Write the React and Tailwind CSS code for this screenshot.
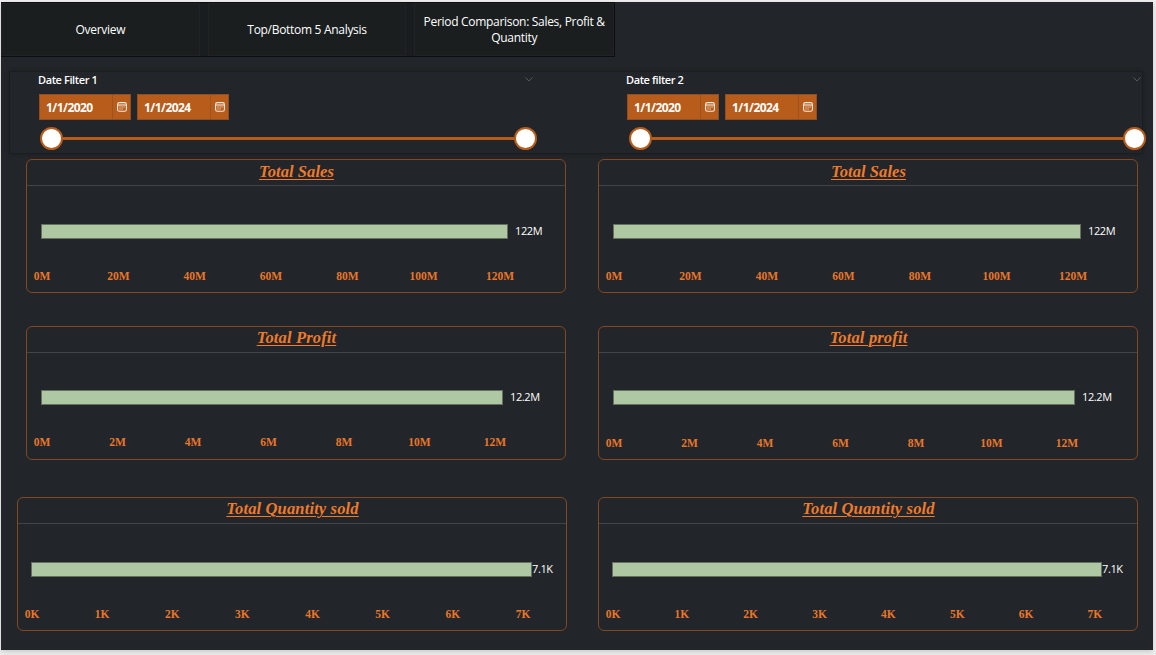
import React from "react";

const tabs = [
  { label: "Overview", width: "w-[199px]" },
  { label: "Top/Bottom 5 Analysis", width: "w-[199px]" },
  { label: "Period Comparison: Sales, Profit & Quantity", width: "w-[200px]" },
];

const salesTicks = ["0M", "20M", "40M", "60M", "80M", "100M", "120M"];
const profitTicks = ["0M", "2M", "4M", "6M", "8M", "10M", "12M"];
const quantityTicks = ["0K", "1K", "2K", "3K", "4K", "5K", "6K", "7K"];

function CalendarIcon() {
  return (
    <svg width="10" height="10" viewBox="0 0 10 10" fill="none" stroke="#f7e9df">
      <rect x="0.6" y="0.6" width="8.8" height="8.6" rx="1.8" strokeWidth="1.1" />
      <path d="M0.6 3h8.8" strokeWidth="1.1" />
      <path d="M2.4 5h1.2M4.5 5h1.2M6.5 5h1.2M2.4 7h1.2M4.5 7h1.2" strokeWidth="1.1" />
    </svg>
  );
}

function DateField({ value }) {
  return (
    <div className="flex h-[26px] w-[92px] border border-[#8f4f24] bg-[#b75c1b]">
      <div className="flex w-[73px] items-center border-r border-[#9c5421] pl-[6px] pt-px font-['Open_Sans',sans-serif] text-[12px] font-bold leading-none tracking-[-0.55px] text-white">
        {value}
      </div>
      <div className="flex flex-1 items-center justify-center">
        <CalendarIcon />
      </div>
    </div>
  );
}

function Handle() {
  return <div className="size-[23px] shrink-0 rounded-full border-2 border-[#b75c1b] bg-white" />;
}

function DateFilter({ title, className, slider }) {
  return (
    <div className={className}>
      <div className="flex h-[16px] items-center justify-between pb-[2px]">
        <span className="text-[11px] font-semibold leading-none tracking-[-0.4px] text-white">{title}</span>
        <svg className="mr-px" width="8" height="5" viewBox="0 0 8 5" fill="none" stroke="#55585b">
          <path d="M0.5 0.5 4 4 7.5 0.5" />
        </svg>
      </div>
      <div className="ml-px mt-[6px] flex gap-[6px]">
        <DateField value="1/1/2020" />
        <DateField value="1/1/2024" />
      </div>
      <div className={`mt-[7px] flex items-center ${slider}`}>
        <Handle />
        <div className="h-[3px] flex-1 bg-[#b75c1b]" />
        <Handle />
      </div>
    </div>
  );
}

function BarCard({ title, value, ticks, card, heading, plot, bar, axis, valueGap }) {
  return (
    <section className={`h-[134px] rounded-[6px] border border-[#84471f] ${card}`}>
      <h2
        className={`flex h-[26px] items-start justify-center border-b border-[#424547] pl-px font-['Liberation_Serif',serif] text-[16.5px] font-bold italic leading-[18px] text-[#ee7a2b] ${heading}`}
      >
        <span className="underline decoration-1 underline-offset-2">{title}</span>
      </h2>
      <div className={`flex h-[15px] items-center ${plot}`}>
        <div className={`h-[15px] border border-[#65705f] bg-[#aec8a3] ${bar}`} />
        <span
          className={`pb-[2px] font-['Open_Sans',sans-serif] text-[11px] font-medium leading-none tracking-[-0.4px] text-white ${valueGap}`}
        >
          {value}
        </span>
      </div>
      <div className={`flex justify-between ${axis}`}>
        {ticks.map((tick) => (
          <span
            key={tick}
            className="flex w-0 justify-center whitespace-nowrap font-['Liberation_Serif',serif] text-[11.5px] font-bold leading-[14px] text-[#e8772b]"
          >
            {tick}
          </span>
        ))}
      </div>
    </section>
  );
}

export default function App() {
  return (
    <div className="h-[655px] w-[1156px] overflow-hidden bg-[#eeeeee] pl-px pt-[2px] font-['Open_Sans',sans-serif]">
      <main className="h-[648px] w-[1152px] bg-[#222529] shadow-[0_2px_5px_rgba(0,0,0,0.15)]">
        <nav className="flex h-[55px] w-[614px] gap-[8px] border-b border-r border-t border-[#0c0d0e] bg-[#1a1d20]">
          {tabs.map((tab) => (
            <button
              key={tab.label}
              className={`flex h-[53px] items-center justify-center border border-[#202224] bg-[#1a1e1f] px-[5px] text-center text-[12px] font-medium leading-[16px] tracking-[-0.3px] text-white ${tab.width}`}
            >
              {tab.label}
            </button>
          ))}
        </nav>

        <div className="ml-[8px] mt-[14px] flex h-[83px] w-[1134px] border border-[#1b1e21] shadow-[0_0_5px_rgba(0,0,0,0.18)]">
          <DateFilter title="Date Filter 1" className="ml-[28px] w-[496px]" slider="ml-[2px] w-[497px]" />
          <DateFilter title="Date filter 2" className="ml-[92px] w-[516px] shrink-0" slider="ml-[3px] w-[517px]" />
        </div>

        <div className="mt-[5px] flex gap-[32px] pl-[25px]">
          <BarCard title="Total Sales" value="122M" ticks={salesTicks} card="w-[540px]" heading="pt-[3px] tracking-[0.08px]" plot="mt-[38px]" bar="ml-[14px] w-[467px]" axis="ml-[15px] mt-[30px] w-[458px]" valueGap="ml-[7px]" />
          <BarCard title="Total Sales" value="122M" ticks={salesTicks} card="w-[540px]" heading="pt-[3px] tracking-[0.08px]" plot="mt-[38px]" bar="ml-[14px] w-[468px]" axis="ml-[15px] mt-[30px] w-[459px]" valueGap="ml-[7px]" />
        </div>
        <div className="mt-[33px] flex gap-[32px] pl-[25px]">
          <BarCard title="Total Profit" value="12.2M" ticks={profitTicks} card="w-[540px]" heading="pt-[2px] tracking-[0.15px]" plot="mt-[37px]" bar="ml-[14px] w-[462px]" axis="ml-[15px] mt-[30px] w-[453px]" valueGap="ml-[7px]" />
          <BarCard title="Total profit" value="12.2M" ticks={profitTicks} card="w-[540px]" heading="pt-[2px] tracking-[0.15px]" plot="mt-[37px]" bar="ml-[14px] w-[462px]" axis="ml-[15px] mt-[31px] w-[453px]" valueGap="ml-[7px]" />
        </div>
        <div className="mt-[37px] flex gap-[31px] pl-[16px]">
          <BarCard title="Total Quantity sold" value="7.1K" ticks={quantityTicks} card="w-[550px]" heading="pt-[2px] tracking-[0.15px]" plot="mt-[38px]" bar="ml-[13px] w-[501px]" axis="ml-[14px] mt-[30px] w-[491px]" valueGap="ml-0" />
          <BarCard title="Total Quantity sold" value="7.1K" ticks={quantityTicks} card="w-[540px]" heading="pt-[2px] tracking-[0.15px]" plot="mt-[38px]" bar="ml-[13px] w-[490px]" axis="ml-[14px] mt-[30px] w-[482px]" valueGap="ml-0" />
        </div>
      </main>
    </div>
  );
}
